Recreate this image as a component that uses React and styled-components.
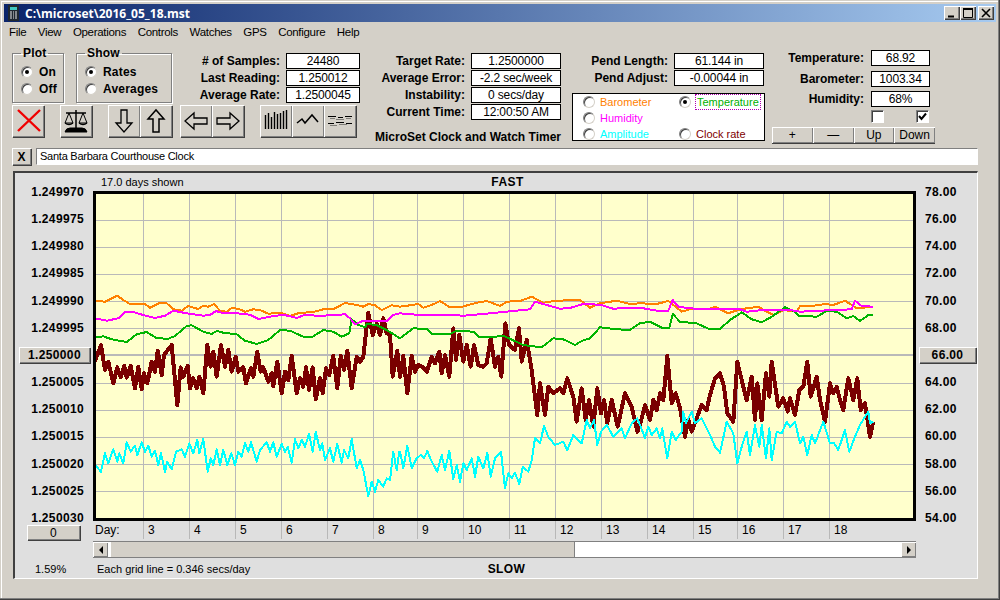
import React from 'react';
import styled, { createGlobalStyle } from 'styled-components';

const GlobalStyle = createGlobalStyle`
  html, body {
    margin: 0;
    padding: 0;
    background: #d4d0c8;
  }
  * {
    box-sizing: border-box;
  }
`;

const Window = styled.div`
  width: 1000px;
  height: 600px;
  padding: 4px;
  overflow: hidden;
  background: #d4d0c8;
  color: #000;
  font-family: "Liberation Sans", Arial, sans-serif;
  font-size: 12px;
  box-shadow: inset -1px -1px #404040, inset -2px -2px #808080, inset 1px 1px #d4d0c8, inset 2px 2px #fff;
`;

const TitleBar = styled.div`
  display: flex;
  align-items: center;
  height: 18px;
  padding: 0 2px 0 4px;
  background: linear-gradient(90deg, #0a246a 0%, #a6caf0 100%);
  color: #fff;
  font-family: "Open Sans", "Liberation Sans", sans-serif;
  font-weight: 700;
  font-size: 12px;
`;

const TitleText = styled.span`
  margin-left: 6px;
  flex: 1;
`;

const WinButton = styled.button`
  display: flex;
  align-items: center;
  justify-content: center;
  width: 16px;
  height: 14px;
  margin-left: ${(p) => (p.$gap ? '2px' : '0')};
  padding: 0;
  border: 0;
  background: #d4d0c8;
  box-shadow: inset 1px 1px #fff, inset -1px -1px #404040, inset -2px -2px #808080;
`;

const MenuBar = styled.div`
  display: flex;
  align-items: center;
  gap: 11.5px;
  height: 19px;
  padding: 1px 0 0 5px;
  font-size: 11.5px;
  letter-spacing: -0.3px;
`;

const Toolbar = styled.div`
  display: flex;
  height: 104px;
  padding-left: 8px;
`;

const LeftColumn = styled.div`
  width: 348px;
  flex: none;
`;

const TopRow = styled.div`
  display: flex;
  align-items: flex-start;
  height: 64px;
  padding-top: 5px;
`;

const Group = styled.fieldset`
  width: ${(p) => p.$w}px;
  height: 57px;
  flex: none;
  margin: 0 12px 0 0;
  padding: 3px 0 0 ${(p) => p.$pad}px;
  border: 1px solid #808080;
  box-shadow: inset 1px 1px #fff, 1px 1px #fff;
`;

const GroupTitle = styled.legend`
  padding: 0 2px;
  margin-left: 0;
  font-weight: 700;
  font-size: 12px;
  letter-spacing: 0.2px;
  line-height: 14px;
`;

const RadioRow = styled.label`
  display: flex;
  align-items: center;
  gap: ${(p) => p.$gap || 5}px;
  height: ${(p) => p.$h || 16}px;
  color: ${(p) => p.$color || '#000'};
  font-weight: ${(p) => (p.$bold ? 700 : 400)};
  letter-spacing: ${(p) => (p.$bold ? '0.2px' : '0')};
`;

const Radio = styled.span`
  position: relative;
  width: 12px;
  height: 12px;
  flex: none;
  border-radius: 50%;
  background: #fff;
  border: 1px solid;
  border-color: #808080 #d4d0c8 #d4d0c8 #808080;
  box-shadow: inset 1px 1px #404040;

  &::after {
    content: '';
    display: ${(p) => (p.$on ? 'block' : 'none')};
    position: absolute;
    left: 3px;
    top: 3px;
    width: 4px;
    height: 4px;
    border-radius: 50%;
    background: #000;
  }
`;

const Readouts = styled.div`
  display: grid;
  grid-template-columns: 1fr ${(p) => p.$box}px;
  column-gap: ${(p) => p.$col || 6}px;
  row-gap: ${(p) => p.$row ?? 1}px;
  flex: ${(p) => (p.$grow ? 1 : 'none')};
  margin-top: ${(p) => p.$top || 0}px;
  margin-right: ${(p) => p.$right || 0}px;
`;

const Label = styled.div`
  justify-self: end;
  align-self: center;
  font-weight: 700;
  letter-spacing: 0;
  white-space: nowrap;
`;

const Value = styled.div`
  height: 16px;
  line-height: 14px;
  text-align: center;
  background: #fff;
  border: 1px solid #000;
  font-size: 12px;
  letter-spacing: -0.15px;
  white-space: nowrap;
`;

const ToolRow = styled.div`
  display: flex;
  height: 32px;
`;

const ToolGroup = styled.div`
  display: flex;
  margin-right: ${(p) => p.$gap}px;
`;

const ToolButton = styled.button`
  display: flex;
  align-items: center;
  justify-content: center;
  width: 32px;
  height: 32px;
  padding: 0;
  border: 0;
  background: #d4d0c8;
  box-shadow: inset 1px 1px #fff, inset -1px -1px #808080, 1px 1px #404040;
`;

const TargetColumn = styled.div`
  width: 201px;
  flex: none;
  padding-top: 12px;
`;

const Brand = styled.div`
  margin-top: 10px;
  text-align: right;
  font-weight: 700;
  white-space: nowrap;
`;

const PendColumn = styled.div`
  width: 193px;
  flex: none;
  margin-left: 11px;
  padding-top: 12px;
`;

const SourcePanel = styled.div`
  display: grid;
  grid-template-columns: 96px 1fr;
  grid-auto-rows: 16px;
  width: 193px;
  height: 48px;
  margin-top: 7px;
  padding: 0 0 0 10px;
  background: #fff;
  border: 1px solid #000;
  font-size: 11px;
`;

const FocusText = styled.span`
  outline: 1px dotted #b000b0;
  padding: 0 1px;
  line-height: 14px;
`;

const ClimateColumn = styled.div`
  width: 163px;
  flex: none;
  margin-left: 7px;
  padding-top: 9px;
`;

const ClimateReadouts = styled(Readouts)`
  padding-right: 5px;
`;

const CheckRow = styled.div`
  display: flex;
  gap: 32px;
  height: 14px;
  margin-top: 3px;
  padding-left: 99px;
`;

const CheckBox = styled.span`
  display: flex;
  align-items: center;
  justify-content: center;
  width: 13px;
  height: 13px;
  background: #fff;
  border: 1px solid;
  border-color: #808080 #fff #fff #808080;
  box-shadow: inset 1px 1px #404040;
`;

const AdjustRow = styled.div`
  display: flex;
  margin-top: 3px;
`;

const AdjustButton = styled.button`
  width: 41px;
  height: 16px;
  padding: 0;
  border: 0;
  background: #d4d0c8;
  font: 12px "Liberation Sans", Arial, sans-serif;
  color: #000;
  box-shadow: inset 1px 1px #fff, inset -1px -1px #808080, 0 1px #404040;
`;

const NoteRow = styled.div`
  display: flex;
  gap: 5px;
  height: 17px;
  margin: 3px 18px 0 8px;
`;

const NoteClose = styled(ToolButton)`
  width: 19px;
  height: 17px;
  font: 700 12px "Liberation Sans", sans-serif;
`;

const NoteInput = styled.div`
  flex: 1;
  height: 17px;
  padding-left: 3px;
  line-height: 15px;
  background: #fff;
  font-size: 11px;
  letter-spacing: -0.25px;
  border: 1px solid;
  border-color: #808080 #fff #fff #808080;
`;

const ChartPanel = styled.div`
  display: flex;
  width: 965px;
  height: 408px;
  margin: 6px 0 0 9px;
  background: #dfdfdf;
  border: 2px solid;
  border-color: #404040 #fff #fff #404040;
  border-right-width: 1px;
  border-bottom-width: 1px;
`;

const LeftAxisColumn = styled.div`
  display: flex;
  flex-direction: column;
  width: 78px;
  flex: none;
  padding-top: 12px;
`;

const Axis = styled.div`
  display: flex;
  flex-direction: column;
  justify-content: space-between;
  align-items: ${(p) => (p.$right ? 'flex-start' : 'flex-end')};
  height: 340px;
  padding: ${(p) => (p.$right ? '0 0 0 9px' : '0 9px 0 0')};
`;

const AxisLabel = styled.div`
  height: 14px;
  line-height: 14px;
  font-weight: 700;
  letter-spacing: 0.35px;
`;

const AxisButton = styled.button`
  width: ${(p) => p.$w}px;
  height: 16px;
  margin: -1px ${(p) => (p.$right ? 0 : '-6px')} -1px ${(p) => (p.$right ? '-6px' : 0)};
  padding: 0;
  border: 0;
  background: #d4d0c8;
  font: 700 12px "Liberation Sans", sans-serif;
  letter-spacing: 0.35px;
  color: #000;
  box-shadow: inset 1px 1px #fff, inset -1px -1px #808080, 1px 1px #404040;
`;

const ZeroButton = styled(AxisButton)`
  width: 53px;
  height: 15px;
  margin: 0 0 0 12px;
  font-weight: 400;
`;

const Percent = styled.div`
  margin: 22px 0 0 20px;
  line-height: 14px;
  font-size: 11px;
`;

const CenterColumn = styled.div`
  width: 823px;
  flex: none;
`;

const PlotHeader = styled.div`
  display: grid;
  grid-template-columns: 1fr auto 1fr;
  align-items: center;
  height: 18px;
  padding: 0 2px 0 8px;
  font-size: 11px;
`;

const PlotFrame = styled.div`
  width: 823px;
  height: 330px;
  background: #ffffcc;
  border: 3px solid #000;
`;

const PlotSvg = styled.svg`
  display: block;
`;

const DayRow = styled.div`
  display: flex;
  height: 18px;
`;

const DayLabel = styled.div`
  width: 50px;
  padding: 2px 0 0 2px;
`;

const DayCell = styled.div`
  width: ${(p) => p.$w}px;
  padding: 2px 0 0 4px;
  border-left: 1px solid #b8b8b8;
`;

const ScrollBar = styled.div`
  display: flex;
  height: 17px;
  margin-top: 2px;
  border-top: 1px solid #808080;
  border-bottom: 1px solid #808080;
  background: #fff;
`;

const ScrollArrow = styled.div`
  display: flex;
  align-items: center;
  justify-content: center;
  width: 15px;
  flex: none;
  background: #d4d0c8;
  box-shadow: inset 1px 1px #fff, inset -1px -1px #808080;
`;

const ScrollThumb = styled.div`
  width: 465px;
  margin-left: 2px;
  background: #d4d0c8;
  border-right: 1px solid #808080;
  box-shadow: inset 1px 0 #fff;
`;

const ScrollTrack = styled.div`
  flex: 1;
`;

const PlotFooter = styled.div`
  display: grid;
  grid-template-columns: 1fr auto 1fr;
  align-items: center;
  height: 14px;
  margin-top: 4px;
  padding: 0 0 0 4px;
  font-size: 11px;
`;

const Bold = styled.span`
  font-weight: 700;
  letter-spacing: 0.4px;
  font-size: 12px;
`;

const RightAxisColumn = styled.div`
  width: 62px;
  padding-top: 12px;
`;

const leftLabels = ['1.249970', '1.249975', '1.249980', '1.249985', '1.249990', '1.249995', null, '1.250005', '1.250010', '1.250015', '1.250020', '1.250025', '1.250030'];
const rightLabels = ['78.00', '76.00', '74.00', '72.00', '70.00', '68.00', null, '64.00', '62.00', '60.00', '58.00', '56.00', '54.00'];
const days = [[3, 46], [4, 46], [5, 46], [6, 46], [7, 46], [8, 44], [9, 46], [10, 46], [11, 46], [12, 46], [13, 46], [14, 46], [15, 44], [16, 46], [17, 46], [18, 60]];
const gridX = [143, 189, 235, 281, 327, 373, 417, 463, 509, 555, 601, 647, 693, 737, 783, 829];
const gridY = [220.5, 247.5, 274.5, 301.5, 328.5, 383.5, 410.5, 437.5, 464.5, 491.5];

// curve points read off the reference, in three overlapping stretches starting at x = 90, 400 and 640
const stretches = [[90, 90, 400], [400, 400, 640], [640, 640, 1000]];
const toPoints = (parts) =>
  parts
    .map((part, i) => {
      const [origin, lo, hi] = stretches[i];
      return part
        .split(' ')
        .map((p) => p.split(',').map(Number))
        .map(([x, y]) => [origin + x / 3, 280 + y / 3])
        .filter(([x]) => x >= lo && x < hi)
        .map(([x, y]) => `${x.toFixed(1)},${y.toFixed(1)}`)
        .join(' ');
    })
    .join(' ');

const series = [
  {
    color: '#7a0000',
    width: 4,
    parts: [
      '15,243 33,195 45,270 55,245 70,310 82,262 92,292 103,258 110,293 122,258 135,325 145,260 155,328 162,280 172,310 185,245 195,275 203,212 215,285 222,225 245,195 262,375 272,262 280,290 293,258 300,325 310,295 320,325 328,290 340,340 352,195 362,260 370,215 380,290 393,195 405,260 415,210 425,275 437,230 445,275 460,262 468,310 483,265 490,290 502,215 512,275 520,262 535,305 545,280 550,318 562,245 575,340 585,275 595,300 605,228 620,340 630,295 640,320 648,262 657,330 668,262 677,358 690,295 698,340 708,265 718,285 730,228 742,325 752,228 762,270 772,212 785,325 800,230 810,245 820,230 835,98 848,165 860,130 870,165 880,115 890,160 900,165 908,290 922,212 930,290',
      '0,290 10,228 22,340 35,228 45,275 55,255 70,262 80,275 95,230 105,250 118,215 125,280 135,225 148,290 160,145 168,240 178,165 190,245 200,195 212,260 222,195 235,255 250,260 260,250 272,175 285,260 295,230 304,290 316,130 327,195 345,210 357,145 365,245 380,180 395,270 412,405 420,310 435,405 445,320 460,340 480,325 490,340 502,295 520,350 530,425 545,325 557,420 567,360 580,440 592,325 603,400 612,360 622,430 635,360 653,440 675,340 695,380 712,455',
      '0,435 15,375 30,420 40,360 50,390 60,340 70,360 82,228 95,370 107,340 120,385 135,470 145,420 155,455 170,415 185,375 200,390 210,345 225,295 240,280 252,320 262,400 280,425 292,245 305,300 320,360 335,290 345,420 352,310 365,420 378,280 388,350 395,245 415,380 430,355 443,395 450,355 465,405 478,330 490,320 502,245 512,350 530,290 540,360 555,425 570,310 580,340 590,320 600,360 610,390 625,295 640,360 652,295 662,390 675,370 690,470 700,425',
    ],
  },
  {
    color: '#00ffff',
    width: 2,
    parts: [
      '15,555 33,575 45,520 55,550 70,508 82,545 88,520 100,550 110,487 122,515 135,497 142,525 155,487 165,515 175,497 185,530 195,512 205,555 213,520 225,575 232,545 245,568 258,515 275,508 285,530 298,490 310,520 322,480 328,520 340,477 353,575 362,535 370,555 380,508 390,555 400,510 412,555 424,520 435,555 445,515 455,530 465,490 475,515 483,487 500,545 510,510 530,487 540,515 550,487 560,530 575,492 585,515 593,500 605,548 615,478 625,505 635,480 645,500 657,462 668,515 677,456 690,510 697,490 705,540 720,505 730,545 742,492 755,548 762,510 775,535 785,477 800,565 810,540 820,570 835,648 845,605 855,635 865,600 880,620 890,595 900,600 910,515 920,570 928,515',
      '0,515 10,565 22,497 35,565 50,535 62,525 72,535 82,513 95,545 112,575 125,525 135,570 148,513 160,597 170,555 180,605 190,550 200,570 215,535 225,590 235,530 250,565 262,518 272,590 285,535 303,515 315,625 325,580 335,595 345,578 358,612 368,560 385,575 395,540 405,475 420,490 432,438 445,470 465,495 490,485 502,510 520,465 530,475 545,490 560,420 570,445 582,420 592,495 603,455 620,435 640,470 665,445 675,475 695,430 712,415',
      '0,435 15,473 25,440 35,465 50,445 60,475 67,445 82,535 95,455 107,480 125,455 130,395 138,430 155,395 165,430 185,415 210,465 225,500 240,518 260,425 280,460 292,550 305,500 320,455 330,525 345,435 358,500 365,435 378,535 388,445 395,540 410,455 425,460 440,425 450,440 465,425 480,490 490,470 502,525 515,465 525,490 550,425 570,490 582,490 595,510 615,450 628,515 645,470 660,435 675,410 685,395 690,430 700,425',
    ],
  },
  {
    color: '#ff8000',
    width: 2,
    parts: [
      '15,62 45,65 65,55 82,47 100,60 120,72 145,72 165,72 180,83 210,68 230,70 250,88 275,92 295,78 325,87 340,77 355,80 372,72 390,92 410,95 425,84 445,86 465,95 490,88 510,90 535,101 570,98 600,108 630,98 665,97 700,88 730,88 765,69 800,75 820,80 835,72 855,76 875,90 905,76 930,74',
      '0,80 30,76 55,72 70,83 95,75 120,63 150,82 180,82 230,68 260,63 300,78 320,65 360,63 395,50 430,68 470,62 540,60 570,83 600,70 650,62 690,72 720,70',
      '0,70 50,72 85,63 100,75 125,95 150,88 205,88 225,80 265,100 300,88 355,80 375,92 400,105 430,90 470,95 480,78 515,78 555,72 580,75 615,62 650,85 700,80',
    ],
  },
  {
    color: '#00b400',
    width: 2,
    parts: [
      '15,172 40,169 65,178 110,186 140,163 170,156 200,175 235,176 255,168 290,138 305,136 340,155 365,162 380,153 400,158 440,163 465,182 500,192 535,180 570,150 600,152 640,170 665,172 700,150 730,155 755,170 778,160 785,118 805,135 825,142 830,132 860,135 890,150 930,174',
      '0,175 40,145 80,147 95,162 150,162 170,152 220,155 235,170 270,172 310,167 370,195 425,202 460,175 490,178 525,195 545,183 570,175 600,142 650,148 690,150 719,130',
      '0,130 30,125 65,143 88,143 98,102 120,125 170,130 205,146 240,147 270,120 305,97 335,118 365,127 395,110 435,82 465,95 475,107 530,110 560,93 590,95 620,115 640,108 660,123 685,105 700,104',
    ],
  },
  {
    color: '#ff00ff',
    width: 2,
    parts: [
      '15,115 50,122 85,115 105,97 130,96 160,105 195,114 225,107 250,92 290,100 340,107 360,105 378,93 400,100 440,100 480,104 505,117 540,110 580,104 620,114 640,106 700,107 765,103 780,115 795,133 820,122 860,122 890,124 910,105 930,98',
      '0,100 60,105 130,104 190,107 250,102 300,97 390,88 405,65 440,75 480,86 510,84 550,72 600,74 640,86 700,83 719,84',
      '0,83 50,92 85,92 98,60 115,80 150,85 200,88 300,88 320,95 370,90 450,90 480,95 540,92 635,88 645,62 665,78 700,80',
    ],
  },
];

const barHeights = [14, 16, 12, 17, 15, 16, 18, 19];

const Icons = {
  cross: (
    <svg width="28" height="28" viewBox="0 0 28 28">
      <path d="M4 3 L26 24 M26 3 L4 24" stroke="#f00000" strokeWidth="2.4" fill="none" />
    </svg>
  ),
  scale: (
    <svg width="28" height="28" viewBox="0 0 28 28" fill="none" stroke="#000">
      <path d="M14 3 V21 M4 6 H24" strokeWidth="1.5" />
      <path d="M7 6 L3 16 H11 Z M21 6 L17 16 H25 Z" strokeWidth="1" />
      <path d="M3 16 Q7 19 11 16 M17 16 Q21 19 25 16" strokeWidth="1.4" />
      <path d="M3 25 Q4 21 8 21 H20 Q24 21 25 25 Z" fill="#000" />
    </svg>
  ),
  down: (
    <svg width="22" height="28" viewBox="0 0 22 28" fill="none" stroke="#000" strokeWidth="1.3">
      <path d="M8 3 H14 V16 H19 L11 25 L3 16 H8 Z" />
    </svg>
  ),
  up: (
    <svg width="22" height="28" viewBox="0 0 22 28" fill="none" stroke="#000" strokeWidth="1.5">
      <path d="M8 25 H14 V12 H19 L11 3 L3 12 H8 Z" />
    </svg>
  ),
  left: (
    <svg width="28" height="22" viewBox="0 0 28 22" fill="none" stroke="#000" strokeWidth="1.3">
      <path d="M25 8 V14 H12 V19 L3 11 L12 3 V8 Z" />
    </svg>
  ),
  right: (
    <svg width="28" height="22" viewBox="0 0 28 22" fill="none" stroke="#000" strokeWidth="1.3">
      <path d="M3 8 V14 H16 V19 L25 11 L16 3 V8 Z" />
    </svg>
  ),
  bars: (
    <svg width="24" height="24" viewBox="0 0 24 24" stroke="#000" strokeWidth="1.4">
      {barHeights.map((h, i) => (
        <line key={i} x1={1.5 + i * 3} x2={1.5 + i * 3} y1={20} y2={20 - h} />
      ))}
    </svg>
  ),
  peaks: (
    <svg width="26" height="24" viewBox="0 0 26 24" fill="none" stroke="#000" strokeWidth="1.5">
      <path d="M2 14 L7 10 L10 14 L17 6 L23 13" />
    </svg>
  ),
  waves: (
    <svg width="26" height="24" viewBox="0 0 26 24" fill="none" stroke="#000" strokeWidth="1">
      <path d="M1 7.5 H9 M11 8.5 H16 M18 7.5 H25" />
      <path d="M3 9.5 H8 M9 10.5 H17 M19 9.5 H24" strokeOpacity="0.4" />
      <path d="M1 14.5 H7 M9 13.5 H17 M19 14.5 H25" />
      <path d="M3 16.5 H10 M12 15.5 H20" strokeOpacity="0.4" />
    </svg>
  ),
};

const CalcIcon = () => (
  <svg width="11" height="16" viewBox="0 0 11 16">
    <rect x="0" y="0" width="11" height="16" fill="#202830" />
    <rect x="2" y="2" width="7" height="3" fill="#3fc8c0" />
    <path d="M2 7 H4 M5 7 H6 M7 7 H9 M2 9 H4 M5 9 H6 M7 9 H9 M2 11 H4 M5 11 H6 M7 11 H9 M2 13 H4 M5 13 H6 M7 13 H9" stroke="#e8e8e8" />
  </svg>
);

const Readout = ({ label, value }) => (
  <>
    <Label>{label}</Label>
    <Value>{value}</Value>
  </>
);

const Plot = () => (
  <PlotFrame>
    <PlotSvg width="817" height="324" viewBox="96 194 817 324" shapeRendering="crispEdges">
      {gridX.map((x) => (
        <line key={x} x1={x + 0.5} x2={x + 0.5} y1={194} y2={518} stroke="#b9b9b9" />
      ))}
      {gridY.map((y) => (
        <line key={y} x1={96} x2={913} y1={y} y2={y} stroke="#b9b9b9" />
      ))}
      <line x1={96} x2={913} y1={355} y2={355} stroke="#b9b9b9" strokeWidth="2" />
      {series.map((s) => (
        <polyline key={s.color} points={toPoints(s.parts)} fill="none" stroke={s.color} strokeWidth={s.width} strokeLinejoin="round" />
      ))}
    </PlotSvg>
  </PlotFrame>
);

const App = () => (
  <Window>
    <GlobalStyle />
    <TitleBar>
      <CalcIcon />
      <TitleText>C:\microset\2016_05_18.mst</TitleText>
      <WinButton>
        <svg width="10" height="10"><path d="M1 8.5 H7" stroke="#000" strokeWidth="2" /></svg>
      </WinButton>
      <WinButton>
        <svg width="10" height="10"><path d="M0.5 1 H9.5 V9.5 H0.5 Z" fill="none" stroke="#000" /><path d="M0 1 H10" stroke="#000" strokeWidth="2" /></svg>
      </WinButton>
      <WinButton $gap>
        <svg width="10" height="10"><path d="M1 1 L9 9 M9 1 L1 9" stroke="#000" strokeWidth="1.6" /></svg>
      </WinButton>
    </TitleBar>

    <MenuBar>
      {['File', 'View', 'Operations', 'Controls', 'Watches', 'GPS', 'Configure', 'Help'].map((m) => (
        <span key={m}>{m}</span>
      ))}
    </MenuBar>

    <Toolbar>
      <LeftColumn>
        <TopRow>
          <Group $w={52} $pad={8}>
            <GroupTitle>Plot</GroupTitle>
            <RadioRow $bold $gap={6} $h={17}><Radio $on />On</RadioRow>
            <RadioRow $bold $gap={6} $h={17}><Radio />Off</RadioRow>
          </Group>
          <Group $w={96} $pad={8}>
            <GroupTitle>Show</GroupTitle>
            <RadioRow $bold $gap={6} $h={17}><Radio $on />Rates</RadioRow>
            <RadioRow $bold $gap={6} $h={17}><Radio />Averages</RadioRow>
          </Group>
          <Readouts $box={74} $top={7} $grow>
            <Readout label="# of Samples:" value="24480" />
            <Readout label="Last Reading:" value="1.250012" />
            <Readout label="Average Rate:" value="1.2500045" />
          </Readouts>
        </TopRow>
        <ToolRow>
          <ToolGroup $gap={16}>
            <ToolButton>{Icons.cross}</ToolButton>
          </ToolGroup>
          <ToolGroup $gap={16}>
            <ToolButton>{Icons.scale}</ToolButton>
          </ToolGroup>
          <ToolGroup $gap={8}>
            <ToolButton>{Icons.down}</ToolButton>
            <ToolButton>{Icons.up}</ToolButton>
          </ToolGroup>
          <ToolGroup $gap={16}>
            <ToolButton>{Icons.left}</ToolButton>
            <ToolButton>{Icons.right}</ToolButton>
          </ToolGroup>
          <ToolGroup $gap={0}>
            <ToolButton>{Icons.bars}</ToolButton>
            <ToolButton>{Icons.peaks}</ToolButton>
            <ToolButton>{Icons.waves}</ToolButton>
          </ToolGroup>
        </ToolRow>
      </LeftColumn>

      <TargetColumn>
        <Readouts $box={90}>
          <Readout label="Target Rate:" value="1.2500000" />
          <Readout label="Average Error:" value="-2.2 sec/week" />
          <Readout label="Instability:" value="0 secs/day" />
          <Readout label="Current Time:" value="12:00:50 AM" />
        </Readouts>
        <Brand>MicroSet Clock and Watch Timer</Brand>
      </TargetColumn>

      <PendColumn>
        <Readouts $box={90} $right={1}>
          <Readout label="Pend Length:" value="61.144 in" />
          <Readout label="Pend Adjust:" value="-0.00044 in" />
        </Readouts>
        <SourcePanel>
          <RadioRow $color="#ff8000"><Radio />Barometer</RadioRow>
          <RadioRow $color="#00b000"><Radio $on /><FocusText>Temperature</FocusText></RadioRow>
          <RadioRow $color="#ff00ff"><Radio />Humidity</RadioRow>
          <span />
          <RadioRow $color="#00ffff"><Radio />Amplitude</RadioRow>
          <RadioRow $color="#800000"><Radio />Clock rate</RadioRow>
        </SourcePanel>
      </PendColumn>

      <ClimateColumn>
        <ClimateReadouts $box={59} $col={7} $row={4.5}>
          <Readout label="Temperature:" value="68.92" />
          <Readout label="Barometer:" value="1003.34" />
          <Readout label="Humidity:" value="68%" />
        </ClimateReadouts>
        <CheckRow>
          <CheckBox />
          <CheckBox>
            <svg width="9" height="9"><path d="M1 4 L3.5 7 L8 1.5" fill="none" stroke="#000" strokeWidth="2" /></svg>
          </CheckBox>
        </CheckRow>
        <AdjustRow>
          <AdjustButton>+</AdjustButton>
          <AdjustButton>—</AdjustButton>
          <AdjustButton>Up</AdjustButton>
          <AdjustButton>Down</AdjustButton>
        </AdjustRow>
      </ClimateColumn>
    </Toolbar>

    <NoteRow>
      <NoteClose>X</NoteClose>
      <NoteInput>Santa Barbara Courthouse Clock</NoteInput>
    </NoteRow>

    <ChartPanel>
      <LeftAxisColumn>
        <Axis>
          {leftLabels.map((t, i) =>
            t ? <AxisLabel key={i}>{t}</AxisLabel> : <AxisButton key={i} $w={71}>1.250000</AxisButton>
          )}
        </Axis>
        <ZeroButton>0</ZeroButton>
        <Percent>1.59%</Percent>
      </LeftAxisColumn>

      <CenterColumn>
        <PlotHeader>
          <span>17.0 days shown</span>
          <Bold>FAST</Bold>
          <span />
        </PlotHeader>
        <Plot />
        <DayRow>
          <DayLabel>Day:</DayLabel>
          {days.map(([d, w]) => (
            <DayCell key={d} $w={w}>{d}</DayCell>
          ))}
        </DayRow>
        <ScrollBar>
          <ScrollArrow>
            <svg width="6" height="8"><path d="M5 0 V8 L1 4 Z" fill="#000" /></svg>
          </ScrollArrow>
          <ScrollThumb />
          <ScrollTrack />
          <ScrollArrow>
            <svg width="6" height="8"><path d="M1 0 V8 L5 4 Z" fill="#000" /></svg>
          </ScrollArrow>
        </ScrollBar>
        <PlotFooter>
          <span>Each grid line = 0.346 secs/day</span>
          <Bold>SLOW</Bold>
          <span />
        </PlotFooter>
      </CenterColumn>

      <RightAxisColumn>
        <Axis $right>
          {rightLabels.map((t, i) =>
            t ? <AxisLabel key={i}>{t}</AxisLabel> : <AxisButton key={i} $right $w={57}>66.00</AxisButton>
          )}
        </Axis>
      </RightAxisColumn>
    </ChartPanel>
  </Window>
);

export default App;
